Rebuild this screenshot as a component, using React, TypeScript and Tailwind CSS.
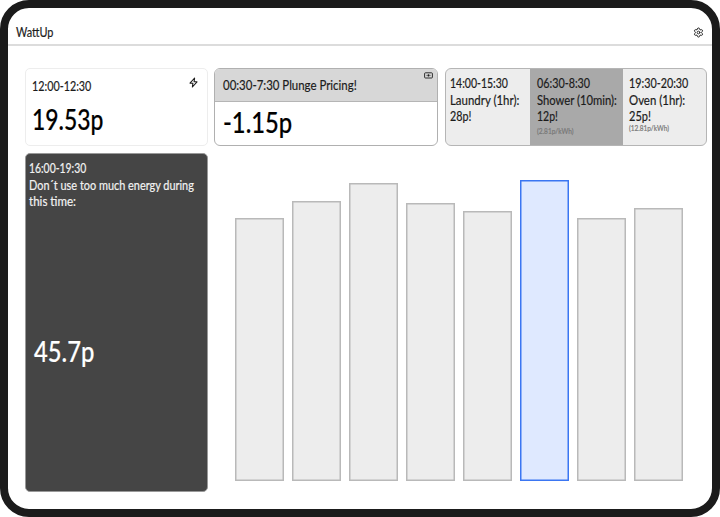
import type { ReactNode } from "react";
import { Settings } from "lucide-react";

function Label({ className, children }: { className: string; children: ReactNode }) {
  return (
    <div className={`w-max origin-left whitespace-nowrap [-webkit-text-stroke:0.2px_currentColor] ${className}`}>{children}</div>
  );
}

const bars = [
  { height: 263 },
  { height: 280 },
  { height: 298 },
  { height: 278 },
  { height: 270 },
  { height: 301, active: true },
  { height: 263 },
  { height: 273 },
];

function Header() {
  return (
    <header className="flex h-[38px] items-center justify-between border-b-2 border-[#dcdcdc] pt-[12px] pr-[8px] pl-[8px]">
      <Label className="scale-x-[.78] text-[14px] leading-[18px]">WattUp</Label>
      <Settings className="size-[11px]" strokeWidth={2} />
    </header>
  );
}

function CurrentPrice() {
  return (
    <section className="flex h-[78px] w-[183px] justify-between rounded-[5px] border border-[#ededed] pl-[6px]">
      <div>
        <Label className="mt-[8px] scale-x-[.81] text-[13.3px] leading-[18px]">12:00-12:30</Label>
        <Label className="mt-[6px] scale-x-[.79] text-[29px] leading-[36px] font-medium text-black">19.53p</Label>
      </div>
      <svg className="mt-[8px] mr-[9px] h-[11px] w-[9px]" viewBox="0 0 9 11" fill="none" stroke="currentColor" strokeWidth="1.1" strokeLinejoin="round">
        <path d="M5.6 1 1 6.2h2.9L3.4 10 8 4.8H5.1z" />
      </svg>
    </section>
  );
}

function PlungePrice() {
  return (
    <section className="h-[78px] w-[224px] overflow-hidden rounded-[6px] border border-[#b0b0b0]">
      <div className="flex h-[33px] justify-between border-b border-[#b5b5b5] bg-[#d7d7d7] pl-[8px]">
        <Label className="mt-[7px] scale-x-[.86] text-[13.3px] leading-[18px]">00:30-7:30 Plunge Pricing!</Label>
        <svg className="-ml-8 mt-[3px] mr-[4px] h-[7px] w-[9px]" viewBox="0 0 9 7" fill="none" stroke="currentColor">
          <rect x=".6" y=".8" width="7.8" height="5.2" rx=".8" strokeWidth=".9" />
          <circle cx="4.5" cy="3.4" r=".9" fill="currentColor" strokeWidth=".4" />
          <path d="M2 3.4h.5M6.5 3.4H7" strokeWidth=".7" />
        </svg>
      </div>
      <Label className="mt-[2px] ml-[8px] scale-x-[.82] text-[29px] leading-[36px] font-medium text-black">-1.15p</Label>
    </section>
  );
}

function Appliances() {
  return (
    <section className="flex h-[78px] w-[262px] overflow-hidden rounded-[6px] border border-[#b5b5b5] bg-[#ededed] text-[13.3px] leading-[16.7px]">
      <div className="w-[84px] pt-[6px] pl-[4px]">
        <Label className="scale-x-[.79]">14:00-15:30</Label>
        <Label className="scale-x-[.86]">Laundry (1hr):</Label>
        <Label className="scale-x-[.81]">28p!</Label>
      </div>
      <div className="w-[93px] bg-[#a9a9a9] pt-[6px] pl-[7px]">
        <Label className="scale-x-[.81]">06:30-8:30</Label>
        <Label className="scale-x-[.845]">Shower (10min):</Label>
        <Label className="scale-x-[.79]">12p!</Label>
        <Label className="mt-[1px] scale-x-[.82] text-[8px] leading-[10px] text-[#777] [-webkit-text-stroke-width:0px]">(2.81p/kWh)</Label>
      </div>
      <div className="pt-[6px] pl-[6px]">
        <Label className="scale-x-[.81]">19:30-20:30</Label>
        <Label className="scale-x-[.86]">Oven (1hr):</Label>
        <Label className="scale-x-[.83]">25p!</Label>
        <Label className="-mt-[2px] scale-x-[.81] text-[8px] leading-[10px] text-[#777] [-webkit-text-stroke-width:0px]">(12.81p/kWh)</Label>
      </div>
    </section>
  );
}

function PeakWarning() {
  return (
    <section className="h-[339px] w-[183px] rounded-[5px] border border-[#999] bg-[#454545] pt-[6px] pl-[3px] text-[13.3px] leading-[16.7px] text-[#f2f2f2]">
      <Label className="scale-x-[.78]">16:00-19:30</Label>
      <Label className="scale-x-[.82]">Don´t use too much energy during</Label>
      <Label className="scale-x-[.87]">this time:</Label>
      <Label className="mt-[123px] ml-[5px] scale-x-[.82] text-[29px] leading-[36px] font-medium text-white">45.7p</Label>
    </section>
  );
}

function Chart() {
  return (
    <section className="ml-[27px] flex h-[328px] items-end gap-[8px]">
      {bars.map((bar, i) => (
        <div
          key={i}
          className={bar.active
            ? "w-[49px] border border-[#3b76f2] bg-[#dfe9ff] shadow-[inset_0_0_0_0.5px_#3b76f2]"
            : "w-[49px] border border-[#b9b9b9] bg-[#ededed] shadow-[inset_0_0_0_0.5px_#b9b9b9]"}
          style={{ height: bar.height }}
        />
      ))}
    </section>
  );
}

export default function App() {
  return (
    <main className="h-[517px] w-[720px] overflow-hidden rounded-[29px] border-8 border-[#1b1b1b] bg-white font-[Lato,sans-serif] text-[#1c1c1c]">
      <Header />
      <div className="pt-[22px] pl-[17px]">
        <div className="flex">
          <CurrentPrice />
          <div className="ml-[6px]"><PlungePrice /></div>
          <div className="ml-[7px]"><Appliances /></div>
        </div>
        <div className="mt-[7px] flex">
          <PeakWarning />
          <Chart />
        </div>
      </div>
    </main>
  );
}
